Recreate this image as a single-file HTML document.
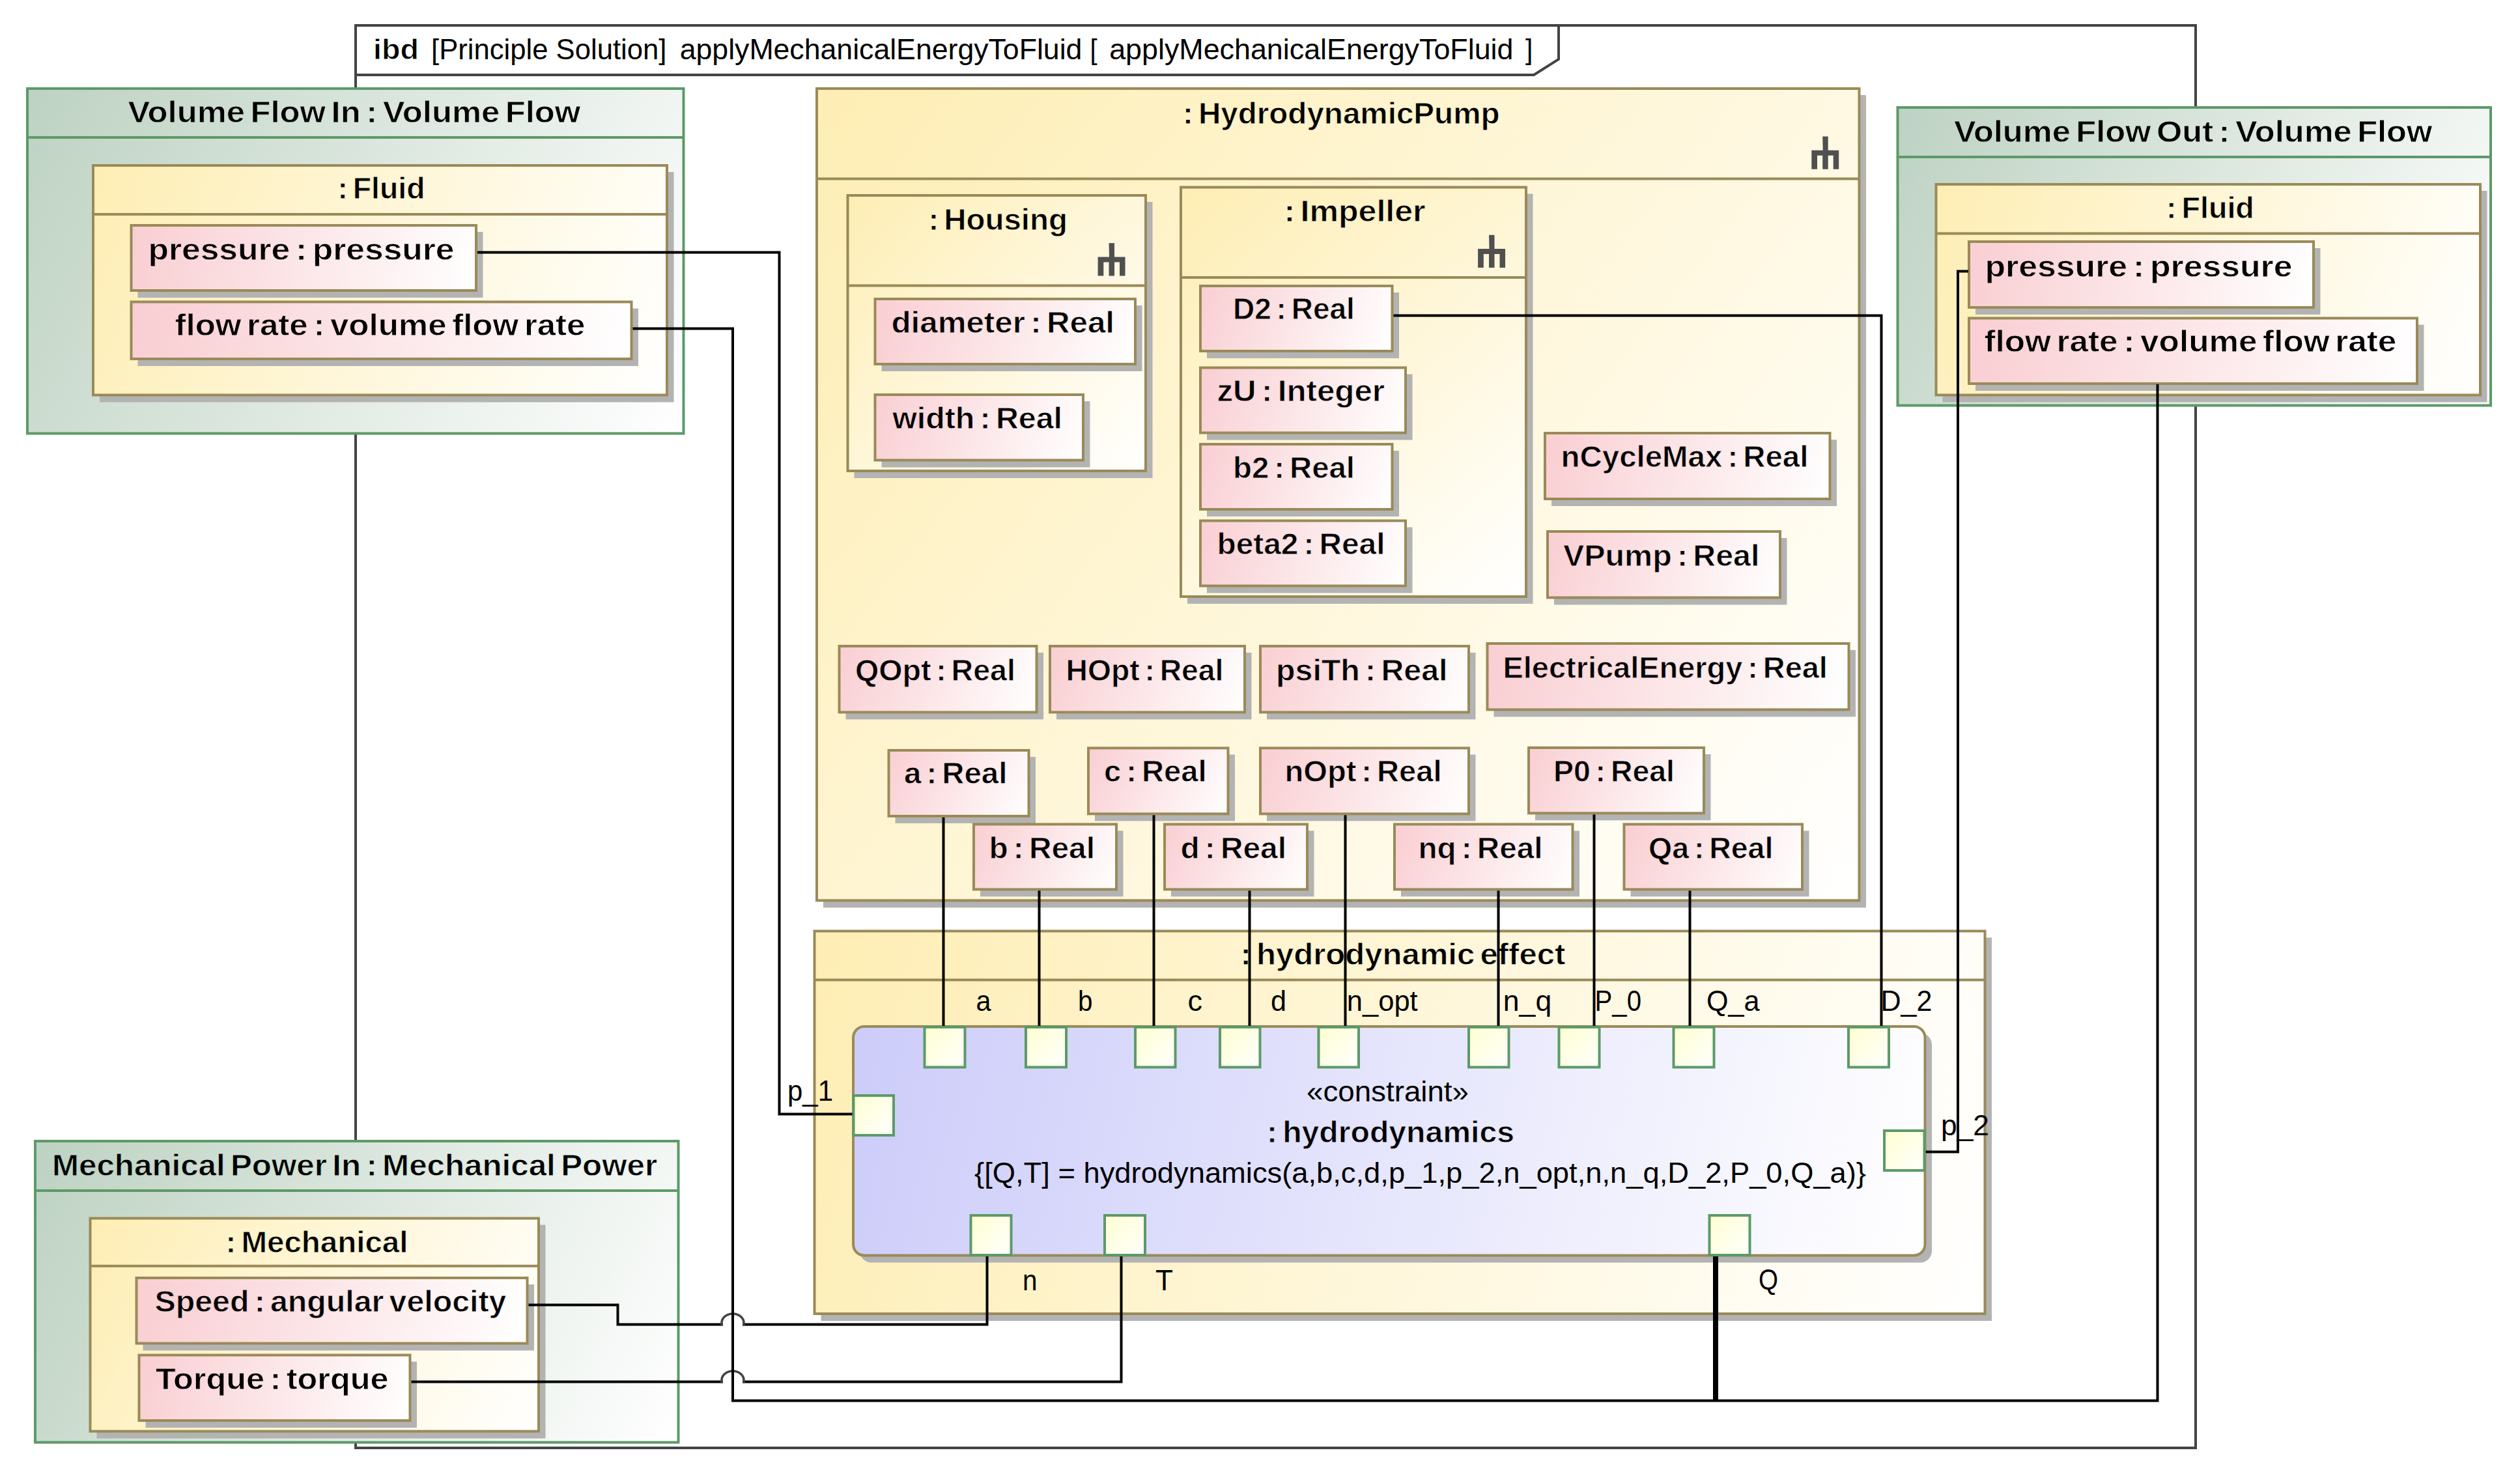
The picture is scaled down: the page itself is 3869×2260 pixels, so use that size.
<!DOCTYPE html>
<html><head><meta charset="utf-8"><title>ibd applyMechanicalEnergyToFluid</title>
<style>html,body{margin:0;padding:0;background:#fff;overflow:hidden}svg{display:block}text{font-family:"Liberation Sans",sans-serif}</style>
</head><body>
<svg width="3869" height="2260" viewBox="0 0 3869 2260">
<rect width="3869" height="2260" fill="#fff"/>
<defs><linearGradient id="gG0" gradientUnits="userSpaceOnUse" x1="40" y1="134" x2="1051.5" y2="667.5"><stop offset="0" stop-color="#BDD2C2"/><stop offset="1" stop-color="#FFFFFF"/></linearGradient><linearGradient id="gY1" gradientUnits="userSpaceOnUse" x1="141" y1="252" x2="1026" y2="608.5"><stop offset="0" stop-color="#FEEEB4"/><stop offset="1" stop-color="#FFFFFF"/></linearGradient><linearGradient id="gP2" gradientUnits="userSpaceOnUse" x1="199.5" y1="344" x2="733" y2="448"><stop offset="0" stop-color="#F9CED2"/><stop offset="1" stop-color="#FFFFFF"/></linearGradient><linearGradient id="gP3" gradientUnits="userSpaceOnUse" x1="199.5" y1="461.5" x2="971.5" y2="553"><stop offset="0" stop-color="#F9CED2"/><stop offset="1" stop-color="#FFFFFF"/></linearGradient><linearGradient id="gG4" gradientUnits="userSpaceOnUse" x1="2911.5" y1="163" x2="3826" y2="624.5"><stop offset="0" stop-color="#BDD2C2"/><stop offset="1" stop-color="#FFFFFF"/></linearGradient><linearGradient id="gY5" gradientUnits="userSpaceOnUse" x1="2970.5" y1="281" x2="3810" y2="608.5"><stop offset="0" stop-color="#FEEEB4"/><stop offset="1" stop-color="#FFFFFF"/></linearGradient><linearGradient id="gP6" gradientUnits="userSpaceOnUse" x1="3021" y1="369" x2="3554" y2="474"><stop offset="0" stop-color="#F9CED2"/><stop offset="1" stop-color="#FFFFFF"/></linearGradient><linearGradient id="gP7" gradientUnits="userSpaceOnUse" x1="3021" y1="486.5" x2="3713" y2="591"><stop offset="0" stop-color="#F9CED2"/><stop offset="1" stop-color="#FFFFFF"/></linearGradient><linearGradient id="gG8" gradientUnits="userSpaceOnUse" x1="52" y1="1750" x2="1043.5" y2="2216.5"><stop offset="0" stop-color="#BDD2C2"/><stop offset="1" stop-color="#FFFFFF"/></linearGradient><linearGradient id="gY9" gradientUnits="userSpaceOnUse" x1="136.5" y1="1868.5" x2="829" y2="2199.5"><stop offset="0" stop-color="#FEEEB4"/><stop offset="1" stop-color="#FFFFFF"/></linearGradient><linearGradient id="gP10" gradientUnits="userSpaceOnUse" x1="207.5" y1="1960" x2="811.5" y2="2064.5"><stop offset="0" stop-color="#F9CED2"/><stop offset="1" stop-color="#FFFFFF"/></linearGradient><linearGradient id="gP11" gradientUnits="userSpaceOnUse" x1="211.5" y1="2078.5" x2="631.5" y2="2183"><stop offset="0" stop-color="#F9CED2"/><stop offset="1" stop-color="#FFFFFF"/></linearGradient><linearGradient id="gY12" gradientUnits="userSpaceOnUse" x1="1252" y1="134" x2="2856.5" y2="1384.5"><stop offset="0" stop-color="#FEEEB4"/><stop offset="1" stop-color="#FFFFFF"/></linearGradient><linearGradient id="gY13" gradientUnits="userSpaceOnUse" x1="1299.5" y1="298" x2="1761" y2="725"><stop offset="0" stop-color="#FEEEB4"/><stop offset="1" stop-color="#FFFFFF"/></linearGradient><linearGradient id="gP14" gradientUnits="userSpaceOnUse" x1="1341.5" y1="457" x2="1745" y2="561"><stop offset="0" stop-color="#F9CED2"/><stop offset="1" stop-color="#FFFFFF"/></linearGradient><linearGradient id="gP15" gradientUnits="userSpaceOnUse" x1="1341.5" y1="604" x2="1665" y2="708.5"><stop offset="0" stop-color="#F9CED2"/><stop offset="1" stop-color="#FFFFFF"/></linearGradient><linearGradient id="gY16" gradientUnits="userSpaceOnUse" x1="1811" y1="285.5" x2="2345" y2="918"><stop offset="0" stop-color="#FEEEB4"/><stop offset="1" stop-color="#FFFFFF"/></linearGradient><linearGradient id="gP17" gradientUnits="userSpaceOnUse" x1="1841" y1="437" x2="2139.5" y2="541"><stop offset="0" stop-color="#F9CED2"/><stop offset="1" stop-color="#FFFFFF"/></linearGradient><linearGradient id="gP18" gradientUnits="userSpaceOnUse" x1="1841" y1="562.5" x2="2160" y2="666.5"><stop offset="0" stop-color="#F9CED2"/><stop offset="1" stop-color="#FFFFFF"/></linearGradient><linearGradient id="gP19" gradientUnits="userSpaceOnUse" x1="1841" y1="680" x2="2139.5" y2="784"><stop offset="0" stop-color="#F9CED2"/><stop offset="1" stop-color="#FFFFFF"/></linearGradient><linearGradient id="gP20" gradientUnits="userSpaceOnUse" x1="1841" y1="797.5" x2="2160" y2="901.5"><stop offset="0" stop-color="#F9CED2"/><stop offset="1" stop-color="#FFFFFF"/></linearGradient><linearGradient id="gP21" gradientUnits="userSpaceOnUse" x1="2370" y1="663" x2="2811.5" y2="768"><stop offset="0" stop-color="#F9CED2"/><stop offset="1" stop-color="#FFFFFF"/></linearGradient><linearGradient id="gP22" gradientUnits="userSpaceOnUse" x1="2374" y1="814" x2="2735" y2="919.5"><stop offset="0" stop-color="#F9CED2"/><stop offset="1" stop-color="#FFFFFF"/></linearGradient><linearGradient id="gP23" gradientUnits="userSpaceOnUse" x1="1286.5" y1="990" x2="1593.5" y2="1095.5"><stop offset="0" stop-color="#F9CED2"/><stop offset="1" stop-color="#FFFFFF"/></linearGradient><linearGradient id="gP24" gradientUnits="userSpaceOnUse" x1="1610" y1="990" x2="1913" y2="1095.5"><stop offset="0" stop-color="#F9CED2"/><stop offset="1" stop-color="#FFFFFF"/></linearGradient><linearGradient id="gP25" gradientUnits="userSpaceOnUse" x1="1933" y1="990" x2="2257" y2="1095.5"><stop offset="0" stop-color="#F9CED2"/><stop offset="1" stop-color="#FFFFFF"/></linearGradient><linearGradient id="gP26" gradientUnits="userSpaceOnUse" x1="2281.5" y1="986" x2="2840.5" y2="1091.5"><stop offset="0" stop-color="#F9CED2"/><stop offset="1" stop-color="#FFFFFF"/></linearGradient><linearGradient id="gP27" gradientUnits="userSpaceOnUse" x1="1362.5" y1="1150" x2="1581.5" y2="1255"><stop offset="0" stop-color="#F9CED2"/><stop offset="1" stop-color="#FFFFFF"/></linearGradient><linearGradient id="gP28" gradientUnits="userSpaceOnUse" x1="1669" y1="1146.5" x2="1887.5" y2="1251.5"><stop offset="0" stop-color="#F9CED2"/><stop offset="1" stop-color="#FFFFFF"/></linearGradient><linearGradient id="gP29" gradientUnits="userSpaceOnUse" x1="1933" y1="1146.5" x2="2257" y2="1251.5"><stop offset="0" stop-color="#F9CED2"/><stop offset="1" stop-color="#FFFFFF"/></linearGradient><linearGradient id="gP30" gradientUnits="userSpaceOnUse" x1="2345" y1="1146" x2="2618" y2="1250.5"><stop offset="0" stop-color="#F9CED2"/><stop offset="1" stop-color="#FFFFFF"/></linearGradient><linearGradient id="gP31" gradientUnits="userSpaceOnUse" x1="1493" y1="1263.5" x2="1716" y2="1367.5"><stop offset="0" stop-color="#F9CED2"/><stop offset="1" stop-color="#FFFFFF"/></linearGradient><linearGradient id="gP32" gradientUnits="userSpaceOnUse" x1="1786" y1="1263.5" x2="2009" y2="1367.5"><stop offset="0" stop-color="#F9CED2"/><stop offset="1" stop-color="#FFFFFF"/></linearGradient><linearGradient id="gP33" gradientUnits="userSpaceOnUse" x1="2139" y1="1263.5" x2="2416.5" y2="1367.5"><stop offset="0" stop-color="#F9CED2"/><stop offset="1" stop-color="#FFFFFF"/></linearGradient><linearGradient id="gP34" gradientUnits="userSpaceOnUse" x1="2491.5" y1="1263.5" x2="2769" y2="1367.5"><stop offset="0" stop-color="#F9CED2"/><stop offset="1" stop-color="#FFFFFF"/></linearGradient><linearGradient id="gY35" gradientUnits="userSpaceOnUse" x1="1248.5" y1="1427.5" x2="3049.5" y2="2019"><stop offset="0" stop-color="#FEEEB4"/><stop offset="1" stop-color="#FFFFFF"/></linearGradient><linearGradient id="gB36" gradientUnits="userSpaceOnUse" x1="1308" y1="1574" x2="2957.5" y2="1929.5"><stop offset="0" stop-color="#CCCCFA"/><stop offset="1" stop-color="#FFFFFF"/></linearGradient><linearGradient id="gQ37" gradientUnits="userSpaceOnUse" x1="1417.5" y1="1575" x2="1483.5" y2="1640.5"><stop offset="0" stop-color="#FFFFD0"/><stop offset="1" stop-color="#FFFFFF"/></linearGradient><linearGradient id="gQ38" gradientUnits="userSpaceOnUse" x1="1573" y1="1575" x2="1639" y2="1640.5"><stop offset="0" stop-color="#FFFFD0"/><stop offset="1" stop-color="#FFFFFF"/></linearGradient><linearGradient id="gQ39" gradientUnits="userSpaceOnUse" x1="1741" y1="1575" x2="1806.5" y2="1640.5"><stop offset="0" stop-color="#FFFFD0"/><stop offset="1" stop-color="#FFFFFF"/></linearGradient><linearGradient id="gQ40" gradientUnits="userSpaceOnUse" x1="1871" y1="1575" x2="1936.5" y2="1640.5"><stop offset="0" stop-color="#FFFFD0"/><stop offset="1" stop-color="#FFFFFF"/></linearGradient><linearGradient id="gQ41" gradientUnits="userSpaceOnUse" x1="2022.5" y1="1575" x2="2088" y2="1640.5"><stop offset="0" stop-color="#FFFFD0"/><stop offset="1" stop-color="#FFFFFF"/></linearGradient><linearGradient id="gQ42" gradientUnits="userSpaceOnUse" x1="2253" y1="1575" x2="2318.5" y2="1640.5"><stop offset="0" stop-color="#FFFFD0"/><stop offset="1" stop-color="#FFFFFF"/></linearGradient><linearGradient id="gQ43" gradientUnits="userSpaceOnUse" x1="2391.5" y1="1575" x2="2457.5" y2="1640.5"><stop offset="0" stop-color="#FFFFD0"/><stop offset="1" stop-color="#FFFFFF"/></linearGradient><linearGradient id="gQ44" gradientUnits="userSpaceOnUse" x1="2567.5" y1="1575" x2="2633.5" y2="1640.5"><stop offset="0" stop-color="#FFFFD0"/><stop offset="1" stop-color="#FFFFFF"/></linearGradient><linearGradient id="gQ45" gradientUnits="userSpaceOnUse" x1="2836" y1="1575" x2="2902" y2="1640.5"><stop offset="0" stop-color="#FFFFD0"/><stop offset="1" stop-color="#FFFFFF"/></linearGradient><linearGradient id="gQ46" gradientUnits="userSpaceOnUse" x1="1308.5" y1="1680" x2="1374" y2="1745"><stop offset="0" stop-color="#FFFFD0"/><stop offset="1" stop-color="#FFFFFF"/></linearGradient><linearGradient id="gQ47" gradientUnits="userSpaceOnUse" x1="2891" y1="1734" x2="2956.5" y2="1799"><stop offset="0" stop-color="#FFFFD0"/><stop offset="1" stop-color="#FFFFFF"/></linearGradient><linearGradient id="gQ48" gradientUnits="userSpaceOnUse" x1="1488.5" y1="1864" x2="1554.5" y2="1929"><stop offset="0" stop-color="#FFFFD0"/><stop offset="1" stop-color="#FFFFFF"/></linearGradient><linearGradient id="gQ49" gradientUnits="userSpaceOnUse" x1="1694" y1="1864" x2="1760" y2="1929"><stop offset="0" stop-color="#FFFFD0"/><stop offset="1" stop-color="#FFFFFF"/></linearGradient><linearGradient id="gQ50" gradientUnits="userSpaceOnUse" x1="2622.5" y1="1864" x2="2688.5" y2="1929"><stop offset="0" stop-color="#FFFFD0"/><stop offset="1" stop-color="#FFFFFF"/></linearGradient></defs>
<path d="M546 39 H3371 V2223 H546 Z" fill="none" stroke="#444" stroke-width="4"/>
<path d="M546 115 H2355 L2393 91 V39" fill="none" stroke="#444" stroke-width="4"/>
<text x="573.0" y="91.0" font-size="45" font-weight="bold" stroke="#fff" stroke-width="0.8" textLength="70.0" lengthAdjust="spacingAndGlyphs" fill="#000">ibd</text>
<text x="662.0" y="91.0" font-size="45" font-weight="normal" textLength="179.5" lengthAdjust="spacingAndGlyphs" fill="#000">[Principle</text>
<text x="853.6" y="91.0" font-size="45" font-weight="normal" textLength="169.8" lengthAdjust="spacingAndGlyphs" fill="#000">Solution]</text>
<text x="1043.7" y="91.0" font-size="45" font-weight="normal" textLength="617.7" lengthAdjust="spacingAndGlyphs" fill="#000">applyMechanicalEnergyToFluid</text>
<text x="1673.4" y="91.0" font-size="45" font-weight="normal" textLength="11.1" lengthAdjust="spacingAndGlyphs" fill="#000">[</text>
<text x="1703.2" y="91.0" font-size="45" font-weight="normal" textLength="620.3" lengthAdjust="spacingAndGlyphs" fill="#000">applyMechanicalEnergyToFluid</text>
<text x="2342.0" y="91.0" font-size="45" font-weight="normal" textLength="11.3" lengthAdjust="spacingAndGlyphs" fill="#000">]</text>
<rect x="42.0" y="136.0" width="1007.5" height="529.5" fill="url(#gG0)" stroke="#5C9A68" stroke-width="4"/>
<line x1="42.0" y1="211.0" x2="1049.5" y2="211.0" stroke="#5C9A68" stroke-width="4"/>
<text x="196.5" y="188.0" font-size="46" font-weight="bold" stroke="url(#gG0)" stroke-width="0.8" textLength="179.5" lengthAdjust="spacingAndGlyphs" fill="#000">Volume</text>
<text x="384.5" y="188.0" font-size="46" font-weight="bold" stroke="url(#gG0)" stroke-width="0.8" textLength="115.5" lengthAdjust="spacingAndGlyphs" fill="#000">Flow</text>
<text x="508.6" y="188.0" font-size="46" font-weight="bold" stroke="url(#gG0)" stroke-width="0.8" textLength="45.1" lengthAdjust="spacingAndGlyphs" fill="#000">In</text>
<text x="562.3" y="188.0" font-size="46" font-weight="bold" stroke="url(#gG0)" stroke-width="0.8" textLength="16.9" lengthAdjust="spacingAndGlyphs" fill="#000">:</text>
<text x="587.8" y="188.0" font-size="46" font-weight="bold" stroke="url(#gG0)" stroke-width="0.8" textLength="179.5" lengthAdjust="spacingAndGlyphs" fill="#000">Volume</text>
<text x="775.8" y="188.0" font-size="46" font-weight="bold" stroke="url(#gG0)" stroke-width="0.8" textLength="115.5" lengthAdjust="spacingAndGlyphs" fill="#000">Flow</text>
<rect x="153.0" y="264.0" width="881.5" height="353.5" fill="#B3B3B3"/>
<rect x="143.0" y="254.0" width="881.0" height="352.5" fill="url(#gY1)" stroke="#9A8A58" stroke-width="4"/>
<line x1="143.0" y1="329.0" x2="1024.0" y2="329.0" stroke="#9A8A58" stroke-width="4"/>
<text x="518.5" y="305.0" font-size="46" font-weight="bold" stroke="url(#gY1)" stroke-width="0.8" textLength="15.4" lengthAdjust="spacingAndGlyphs" fill="#000">:</text>
<text x="541.8" y="305.0" font-size="46" font-weight="bold" stroke="url(#gY1)" stroke-width="0.8" textLength="110.7" lengthAdjust="spacingAndGlyphs" fill="#000">Fluid</text>
<rect x="211.5" y="356.0" width="530.0" height="101.0" fill="#B3B3B3"/>
<rect x="201.5" y="346.0" width="529.5" height="100.0" fill="url(#gP2)" stroke="#9A8A58" stroke-width="4"/>
<text x="227.5" y="398.5" font-size="46" font-weight="bold" stroke="url(#gP2)" stroke-width="0.8" textLength="217.7" lengthAdjust="spacingAndGlyphs" fill="#000">pressure</text>
<text x="453.9" y="398.5" font-size="46" font-weight="bold" stroke="url(#gP2)" stroke-width="0.8" textLength="17.2" lengthAdjust="spacingAndGlyphs" fill="#000">:</text>
<text x="479.8" y="398.5" font-size="46" font-weight="bold" stroke="url(#gP2)" stroke-width="0.8" textLength="217.7" lengthAdjust="spacingAndGlyphs" fill="#000">pressure</text>
<rect x="211.5" y="473.5" width="768.5" height="88.5" fill="#B3B3B3"/>
<rect x="201.5" y="463.5" width="768.0" height="87.5" fill="url(#gP3)" stroke="#9A8A58" stroke-width="4"/>
<text x="268.5" y="515.0" font-size="46" font-weight="bold" stroke="url(#gP3)" stroke-width="0.8" textLength="102.0" lengthAdjust="spacingAndGlyphs" fill="#000">flow</text>
<text x="379.1" y="515.0" font-size="46" font-weight="bold" stroke="url(#gP3)" stroke-width="0.8" textLength="93.6" lengthAdjust="spacingAndGlyphs" fill="#000">rate</text>
<text x="481.4" y="515.0" font-size="46" font-weight="bold" stroke="url(#gP3)" stroke-width="0.8" textLength="17.0" lengthAdjust="spacingAndGlyphs" fill="#000">:</text>
<text x="507.0" y="515.0" font-size="46" font-weight="bold" stroke="url(#gP3)" stroke-width="0.8" textLength="178.6" lengthAdjust="spacingAndGlyphs" fill="#000">volume</text>
<text x="694.2" y="515.0" font-size="46" font-weight="bold" stroke="url(#gP3)" stroke-width="0.8" textLength="102.0" lengthAdjust="spacingAndGlyphs" fill="#000">flow</text>
<text x="804.9" y="515.0" font-size="46" font-weight="bold" stroke="url(#gP3)" stroke-width="0.8" textLength="93.6" lengthAdjust="spacingAndGlyphs" fill="#000">rate</text>
<rect x="2913.5" y="165.0" width="910.5" height="457.5" fill="url(#gG4)" stroke="#5C9A68" stroke-width="4"/>
<line x1="2913.5" y1="241.0" x2="3824.0" y2="241.0" stroke="#5C9A68" stroke-width="4"/>
<text x="3000.0" y="218.0" font-size="46" font-weight="bold" stroke="url(#gG4)" stroke-width="0.8" textLength="178.8" lengthAdjust="spacingAndGlyphs" fill="#000">Volume</text>
<text x="3187.3" y="218.0" font-size="46" font-weight="bold" stroke="url(#gG4)" stroke-width="0.8" textLength="115.1" lengthAdjust="spacingAndGlyphs" fill="#000">Flow</text>
<text x="3311.0" y="218.0" font-size="46" font-weight="bold" stroke="url(#gG4)" stroke-width="0.8" textLength="87.0" lengthAdjust="spacingAndGlyphs" fill="#000">Out</text>
<text x="3406.5" y="218.0" font-size="46" font-weight="bold" stroke="url(#gG4)" stroke-width="0.8" textLength="16.8" lengthAdjust="spacingAndGlyphs" fill="#000">:</text>
<text x="3431.9" y="218.0" font-size="46" font-weight="bold" stroke="url(#gG4)" stroke-width="0.8" textLength="178.8" lengthAdjust="spacingAndGlyphs" fill="#000">Volume</text>
<text x="3619.2" y="218.0" font-size="46" font-weight="bold" stroke="url(#gG4)" stroke-width="0.8" textLength="115.1" lengthAdjust="spacingAndGlyphs" fill="#000">Flow</text>
<rect x="2982.5" y="293.0" width="836.0" height="324.5" fill="#B3B3B3"/>
<rect x="2972.5" y="283.0" width="835.5" height="323.5" fill="url(#gY5)" stroke="#9A8A58" stroke-width="4"/>
<line x1="2972.5" y1="358.5" x2="3808.0" y2="358.5" stroke="#9A8A58" stroke-width="4"/>
<text x="3326.0" y="335.0" font-size="46" font-weight="bold" stroke="url(#gY5)" stroke-width="0.8" textLength="15.5" lengthAdjust="spacingAndGlyphs" fill="#000">:</text>
<text x="3349.4" y="335.0" font-size="46" font-weight="bold" stroke="url(#gY5)" stroke-width="0.8" textLength="111.5" lengthAdjust="spacingAndGlyphs" fill="#000">Fluid</text>
<rect x="3033.0" y="381.0" width="529.5" height="102.0" fill="#B3B3B3"/>
<rect x="3023.0" y="371.0" width="529.0" height="101.0" fill="url(#gP6)" stroke="#9A8A58" stroke-width="4"/>
<text x="3047.5" y="425.0" font-size="46" font-weight="bold" stroke="url(#gP6)" stroke-width="0.8" textLength="218.6" lengthAdjust="spacingAndGlyphs" fill="#000">pressure</text>
<text x="3274.9" y="425.0" font-size="46" font-weight="bold" stroke="url(#gP6)" stroke-width="0.8" textLength="17.2" lengthAdjust="spacingAndGlyphs" fill="#000">:</text>
<text x="3300.9" y="425.0" font-size="46" font-weight="bold" stroke="url(#gP6)" stroke-width="0.8" textLength="218.6" lengthAdjust="spacingAndGlyphs" fill="#000">pressure</text>
<rect x="3033.0" y="498.5" width="688.5" height="101.5" fill="#B3B3B3"/>
<rect x="3023.0" y="488.5" width="688.0" height="100.5" fill="url(#gP7)" stroke="#9A8A58" stroke-width="4"/>
<text x="3046.5" y="540.3" font-size="46" font-weight="bold" stroke="url(#gP7)" stroke-width="0.8" textLength="102.5" lengthAdjust="spacingAndGlyphs" fill="#000">flow</text>
<text x="3157.6" y="540.3" font-size="46" font-weight="bold" stroke="url(#gP7)" stroke-width="0.8" textLength="94.0" lengthAdjust="spacingAndGlyphs" fill="#000">rate</text>
<text x="3260.3" y="540.3" font-size="46" font-weight="bold" stroke="url(#gP7)" stroke-width="0.8" textLength="17.1" lengthAdjust="spacingAndGlyphs" fill="#000">:</text>
<text x="3286.1" y="540.3" font-size="46" font-weight="bold" stroke="url(#gP7)" stroke-width="0.8" textLength="179.4" lengthAdjust="spacingAndGlyphs" fill="#000">volume</text>
<text x="3474.1" y="540.3" font-size="46" font-weight="bold" stroke="url(#gP7)" stroke-width="0.8" textLength="102.5" lengthAdjust="spacingAndGlyphs" fill="#000">flow</text>
<text x="3585.3" y="540.3" font-size="46" font-weight="bold" stroke="url(#gP7)" stroke-width="0.8" textLength="94.0" lengthAdjust="spacingAndGlyphs" fill="#000">rate</text>
<rect x="54.0" y="1752.0" width="987.5" height="462.5" fill="url(#gG8)" stroke="#5C9A68" stroke-width="4"/>
<line x1="54.0" y1="1828.0" x2="1041.5" y2="1828.0" stroke="#5C9A68" stroke-width="4"/>
<text x="80.0" y="1805.0" font-size="46" font-weight="bold" stroke="url(#gG8)" stroke-width="0.8" textLength="265.7" lengthAdjust="spacingAndGlyphs" fill="#000">Mechanical</text>
<text x="354.0" y="1805.0" font-size="46" font-weight="bold" stroke="url(#gG8)" stroke-width="0.8" textLength="147.9" lengthAdjust="spacingAndGlyphs" fill="#000">Power</text>
<text x="510.3" y="1805.0" font-size="46" font-weight="bold" stroke="url(#gG8)" stroke-width="0.8" textLength="43.8" lengthAdjust="spacingAndGlyphs" fill="#000">In</text>
<text x="562.4" y="1805.0" font-size="46" font-weight="bold" stroke="url(#gG8)" stroke-width="0.8" textLength="16.4" lengthAdjust="spacingAndGlyphs" fill="#000">:</text>
<text x="587.1" y="1805.0" font-size="46" font-weight="bold" stroke="url(#gG8)" stroke-width="0.8" textLength="265.7" lengthAdjust="spacingAndGlyphs" fill="#000">Mechanical</text>
<text x="861.2" y="1805.0" font-size="46" font-weight="bold" stroke="url(#gG8)" stroke-width="0.8" textLength="147.9" lengthAdjust="spacingAndGlyphs" fill="#000">Power</text>
<rect x="148.5" y="1880.5" width="689.0" height="328.0" fill="#B3B3B3"/>
<rect x="138.5" y="1870.5" width="688.5" height="327.0" fill="url(#gY9)" stroke="#9A8A58" stroke-width="4"/>
<line x1="138.5" y1="1943.8" x2="827.0" y2="1943.8" stroke="#9A8A58" stroke-width="4"/>
<text x="346.5" y="1922.5" font-size="46" font-weight="bold" stroke="url(#gY9)" stroke-width="0.8" textLength="15.8" lengthAdjust="spacingAndGlyphs" fill="#000">:</text>
<text x="370.4" y="1922.5" font-size="46" font-weight="bold" stroke="url(#gY9)" stroke-width="0.8" textLength="256.1" lengthAdjust="spacingAndGlyphs" fill="#000">Mechanical</text>
<rect x="219.5" y="1972.0" width="600.5" height="101.5" fill="#B3B3B3"/>
<rect x="209.5" y="1962.0" width="600.0" height="100.5" fill="url(#gP10)" stroke="#9A8A58" stroke-width="4"/>
<text x="237.5" y="2013.5" font-size="46" font-weight="bold" stroke="url(#gP10)" stroke-width="0.8" textLength="145.0" lengthAdjust="spacingAndGlyphs" fill="#000">Speed</text>
<text x="390.7" y="2013.5" font-size="46" font-weight="bold" stroke="url(#gP10)" stroke-width="0.8" textLength="16.1" lengthAdjust="spacingAndGlyphs" fill="#000">:</text>
<text x="414.9" y="2013.5" font-size="46" font-weight="bold" stroke="url(#gP10)" stroke-width="0.8" textLength="174.5" lengthAdjust="spacingAndGlyphs" fill="#000">angular</text>
<text x="597.6" y="2013.5" font-size="46" font-weight="bold" stroke="url(#gP10)" stroke-width="0.8" textLength="179.9" lengthAdjust="spacingAndGlyphs" fill="#000">velocity</text>
<rect x="223.5" y="2090.5" width="416.5" height="101.5" fill="#B3B3B3"/>
<rect x="213.5" y="2080.5" width="416.0" height="100.5" fill="url(#gP11)" stroke="#9A8A58" stroke-width="4"/>
<text x="239.0" y="2132.5" font-size="46" font-weight="bold" stroke="url(#gP11)" stroke-width="0.8" textLength="167.0" lengthAdjust="spacingAndGlyphs" fill="#000">Torque</text>
<text x="414.5" y="2132.5" font-size="46" font-weight="bold" stroke="url(#gP11)" stroke-width="0.8" textLength="16.8" lengthAdjust="spacingAndGlyphs" fill="#000">:</text>
<text x="439.8" y="2132.5" font-size="46" font-weight="bold" stroke="url(#gP11)" stroke-width="0.8" textLength="156.7" lengthAdjust="spacingAndGlyphs" fill="#000">torque</text>
<rect x="1264.0" y="146.0" width="1601.0" height="1247.5" fill="#B3B3B3"/>
<rect x="1254.0" y="136.0" width="1600.5" height="1246.5" fill="url(#gY12)" stroke="#9A8A58" stroke-width="4"/>
<line x1="1254.0" y1="274.5" x2="2854.5" y2="274.5" stroke="#9A8A58" stroke-width="4"/>
<text x="1816.0" y="190.0" font-size="46" font-weight="bold" stroke="url(#gY12)" stroke-width="0.8" textLength="15.8" lengthAdjust="spacingAndGlyphs" fill="#000">:</text>
<text x="1839.9" y="190.0" font-size="46" font-weight="bold" stroke="url(#gY12)" stroke-width="0.8" textLength="462.6" lengthAdjust="spacingAndGlyphs" fill="#000">HydrodynamicPump</text>
<path d="M2798.2 209.5h8.5v21.2h16.5v29.1h-8.5v-21h-8v21h-8.5v-21h-8.2v21h-8.7v-29.1h17.4z" fill="#505050"/>
<rect x="1311.5" y="310.0" width="458.0" height="424.0" fill="#B3B3B3"/>
<rect x="1301.5" y="300.0" width="457.5" height="423.0" fill="url(#gY13)" stroke="#9A8A58" stroke-width="4"/>
<line x1="1301.5" y1="438.5" x2="1759.0" y2="438.5" stroke="#9A8A58" stroke-width="4"/>
<text x="1425.5" y="352.5" font-size="46" font-weight="bold" stroke="url(#gY13)" stroke-width="0.8" textLength="15.8" lengthAdjust="spacingAndGlyphs" fill="#000">:</text>
<text x="1449.3" y="352.5" font-size="46" font-weight="bold" stroke="url(#gY13)" stroke-width="0.8" textLength="189.7" lengthAdjust="spacingAndGlyphs" fill="#000">Housing</text>
<path d="M1702.5 373.2h8.5v21.2h16.5v29.1h-8.5v-21h-8v21h-8.5v-21h-8.2v21h-8.7v-29.1h17.4z" fill="#505050"/>
<rect x="1353.5" y="469.0" width="400.0" height="101.0" fill="#B3B3B3"/>
<rect x="1343.5" y="459.0" width="399.5" height="100.0" fill="url(#gP14)" stroke="#9A8A58" stroke-width="4"/>
<text x="1368.5" y="511.0" font-size="46" font-weight="bold" stroke="url(#gP14)" stroke-width="0.8" textLength="205.3" lengthAdjust="spacingAndGlyphs" fill="#000">diameter</text>
<text x="1582.2" y="511.0" font-size="46" font-weight="bold" stroke="url(#gP14)" stroke-width="0.8" textLength="16.4" lengthAdjust="spacingAndGlyphs" fill="#000">:</text>
<text x="1606.9" y="511.0" font-size="46" font-weight="bold" stroke="url(#gP14)" stroke-width="0.8" textLength="104.1" lengthAdjust="spacingAndGlyphs" fill="#000">Real</text>
<rect x="1353.5" y="616.0" width="320.0" height="101.5" fill="#B3B3B3"/>
<rect x="1343.5" y="606.0" width="319.5" height="100.5" fill="url(#gP15)" stroke="#9A8A58" stroke-width="4"/>
<text x="1370.2" y="657.5" font-size="46" font-weight="bold" stroke="url(#gP15)" stroke-width="0.8" textLength="126.2" lengthAdjust="spacingAndGlyphs" fill="#000">width</text>
<text x="1504.6" y="657.5" font-size="46" font-weight="bold" stroke="url(#gP15)" stroke-width="0.8" textLength="16.1" lengthAdjust="spacingAndGlyphs" fill="#000">:</text>
<text x="1528.9" y="657.5" font-size="46" font-weight="bold" stroke="url(#gP15)" stroke-width="0.8" textLength="102.1" lengthAdjust="spacingAndGlyphs" fill="#000">Real</text>
<rect x="1823.0" y="297.5" width="530.5" height="629.5" fill="#B3B3B3"/>
<rect x="1813.0" y="287.5" width="530.0" height="628.5" fill="url(#gY16)" stroke="#9A8A58" stroke-width="4"/>
<line x1="1813.0" y1="426.0" x2="2343.0" y2="426.0" stroke="#9A8A58" stroke-width="4"/>
<text x="1971.5" y="340.0" font-size="46" font-weight="bold" stroke="url(#gY16)" stroke-width="0.8" textLength="16.7" lengthAdjust="spacingAndGlyphs" fill="#000">:</text>
<text x="1996.6" y="340.0" font-size="46" font-weight="bold" stroke="url(#gY16)" stroke-width="0.8" textLength="191.9" lengthAdjust="spacingAndGlyphs" fill="#000">Impeller</text>
<path d="M2286.0 360.7h8.5v21.2h16.5v29.1h-8.5v-21h-8v21h-8.5v-21h-8.2v21h-8.7v-29.1h17.4z" fill="#505050"/>
<rect x="1853.0" y="449.0" width="295.0" height="101.0" fill="#B3B3B3"/>
<rect x="1843.0" y="439.0" width="294.5" height="100.0" fill="url(#gP17)" stroke="#9A8A58" stroke-width="4"/>
<text x="1893.0" y="490.0" font-size="46" font-weight="bold" stroke="url(#gP17)" stroke-width="0.8" textLength="58.8" lengthAdjust="spacingAndGlyphs" fill="#000">D2</text>
<text x="1959.6" y="490.0" font-size="46" font-weight="bold" stroke="url(#gP17)" stroke-width="0.8" textLength="15.3" lengthAdjust="spacingAndGlyphs" fill="#000">:</text>
<text x="1982.7" y="490.0" font-size="46" font-weight="bold" stroke="url(#gP17)" stroke-width="0.8" textLength="97.2" lengthAdjust="spacingAndGlyphs" fill="#000">Real</text>
<rect x="1853.0" y="574.5" width="315.5" height="101.0" fill="#B3B3B3"/>
<rect x="1843.0" y="564.5" width="315.0" height="100.0" fill="url(#gP18)" stroke="#9A8A58" stroke-width="4"/>
<text x="1868.5" y="616.0" font-size="46" font-weight="bold" stroke="url(#gP18)" stroke-width="0.8" textLength="60.2" lengthAdjust="spacingAndGlyphs" fill="#000">zU</text>
<text x="1937.0" y="616.0" font-size="46" font-weight="bold" stroke="url(#gP18)" stroke-width="0.8" textLength="16.4" lengthAdjust="spacingAndGlyphs" fill="#000">:</text>
<text x="1961.8" y="616.0" font-size="46" font-weight="bold" stroke="url(#gP18)" stroke-width="0.8" textLength="164.2" lengthAdjust="spacingAndGlyphs" fill="#000">Integer</text>
<rect x="1853.0" y="692.0" width="295.0" height="101.0" fill="#B3B3B3"/>
<rect x="1843.0" y="682.0" width="294.5" height="100.0" fill="url(#gP19)" stroke="#9A8A58" stroke-width="4"/>
<text x="1893.0" y="733.5" font-size="46" font-weight="bold" stroke="url(#gP19)" stroke-width="0.8" textLength="55.2" lengthAdjust="spacingAndGlyphs" fill="#000">b2</text>
<text x="1956.2" y="733.5" font-size="46" font-weight="bold" stroke="url(#gP19)" stroke-width="0.8" textLength="15.8" lengthAdjust="spacingAndGlyphs" fill="#000">:</text>
<text x="1980.0" y="733.5" font-size="46" font-weight="bold" stroke="url(#gP19)" stroke-width="0.8" textLength="100.0" lengthAdjust="spacingAndGlyphs" fill="#000">Real</text>
<rect x="1853.0" y="809.5" width="315.5" height="101.0" fill="#B3B3B3"/>
<rect x="1843.0" y="799.5" width="315.0" height="100.0" fill="url(#gP20)" stroke="#9A8A58" stroke-width="4"/>
<text x="1868.5" y="851.0" font-size="46" font-weight="bold" stroke="url(#gP20)" stroke-width="0.8" textLength="124.9" lengthAdjust="spacingAndGlyphs" fill="#000">beta2</text>
<text x="2001.5" y="851.0" font-size="46" font-weight="bold" stroke="url(#gP20)" stroke-width="0.8" textLength="15.9" lengthAdjust="spacingAndGlyphs" fill="#000">:</text>
<text x="2025.5" y="851.0" font-size="46" font-weight="bold" stroke="url(#gP20)" stroke-width="0.8" textLength="101.0" lengthAdjust="spacingAndGlyphs" fill="#000">Real</text>
<rect x="2382.0" y="675.0" width="438.0" height="102.0" fill="#B3B3B3"/>
<rect x="2372.0" y="665.0" width="437.5" height="101.0" fill="url(#gP21)" stroke="#9A8A58" stroke-width="4"/>
<text x="2396.5" y="716.5" font-size="46" font-weight="bold" stroke="url(#gP21)" stroke-width="0.8" textLength="247.9" lengthAdjust="spacingAndGlyphs" fill="#000">nCycleMax</text>
<text x="2652.4" y="716.5" font-size="46" font-weight="bold" stroke="url(#gP21)" stroke-width="0.8" textLength="15.8" lengthAdjust="spacingAndGlyphs" fill="#000">:</text>
<text x="2676.2" y="716.5" font-size="46" font-weight="bold" stroke="url(#gP21)" stroke-width="0.8" textLength="100.2" lengthAdjust="spacingAndGlyphs" fill="#000">Real</text>
<rect x="2386.0" y="826.0" width="357.5" height="102.5" fill="#B3B3B3"/>
<rect x="2376.0" y="816.0" width="357.0" height="101.5" fill="url(#gP22)" stroke="#9A8A58" stroke-width="4"/>
<text x="2400.0" y="868.5" font-size="46" font-weight="bold" stroke="url(#gP22)" stroke-width="0.8" textLength="166.7" lengthAdjust="spacingAndGlyphs" fill="#000">VPump</text>
<text x="2574.9" y="868.5" font-size="46" font-weight="bold" stroke="url(#gP22)" stroke-width="0.8" textLength="16.1" lengthAdjust="spacingAndGlyphs" fill="#000">:</text>
<text x="2599.2" y="868.5" font-size="46" font-weight="bold" stroke="url(#gP22)" stroke-width="0.8" textLength="102.2" lengthAdjust="spacingAndGlyphs" fill="#000">Real</text>
<rect x="1298.5" y="1002.0" width="303.5" height="102.5" fill="#B3B3B3"/>
<rect x="1288.5" y="992.0" width="303.0" height="101.5" fill="url(#gP23)" stroke="#9A8A58" stroke-width="4"/>
<text x="1313.0" y="1045.0" font-size="46" font-weight="bold" stroke="url(#gP23)" stroke-width="0.8" textLength="116.4" lengthAdjust="spacingAndGlyphs" fill="#000">QOpt</text>
<text x="1437.2" y="1045.0" font-size="46" font-weight="bold" stroke="url(#gP23)" stroke-width="0.8" textLength="15.5" lengthAdjust="spacingAndGlyphs" fill="#000">:</text>
<text x="1460.6" y="1045.0" font-size="46" font-weight="bold" stroke="url(#gP23)" stroke-width="0.8" textLength="98.3" lengthAdjust="spacingAndGlyphs" fill="#000">Real</text>
<rect x="1622.0" y="1002.0" width="299.5" height="102.5" fill="#B3B3B3"/>
<rect x="1612.0" y="992.0" width="299.0" height="101.5" fill="url(#gP24)" stroke="#9A8A58" stroke-width="4"/>
<text x="1636.5" y="1045.0" font-size="46" font-weight="bold" stroke="url(#gP24)" stroke-width="0.8" textLength="113.1" lengthAdjust="spacingAndGlyphs" fill="#000">HOpt</text>
<text x="1757.4" y="1045.0" font-size="46" font-weight="bold" stroke="url(#gP24)" stroke-width="0.8" textLength="15.4" lengthAdjust="spacingAndGlyphs" fill="#000">:</text>
<text x="1780.7" y="1045.0" font-size="46" font-weight="bold" stroke="url(#gP24)" stroke-width="0.8" textLength="97.8" lengthAdjust="spacingAndGlyphs" fill="#000">Real</text>
<rect x="1945.0" y="1002.0" width="320.5" height="102.5" fill="#B3B3B3"/>
<rect x="1935.0" y="992.0" width="320.0" height="101.5" fill="url(#gP25)" stroke="#9A8A58" stroke-width="4"/>
<text x="1959.0" y="1045.0" font-size="46" font-weight="bold" stroke="url(#gP25)" stroke-width="0.8" textLength="128.9" lengthAdjust="spacingAndGlyphs" fill="#000">psiTh</text>
<text x="2096.1" y="1045.0" font-size="46" font-weight="bold" stroke="url(#gP25)" stroke-width="0.8" textLength="16.1" lengthAdjust="spacingAndGlyphs" fill="#000">:</text>
<text x="2120.4" y="1045.0" font-size="46" font-weight="bold" stroke="url(#gP25)" stroke-width="0.8" textLength="102.1" lengthAdjust="spacingAndGlyphs" fill="#000">Real</text>
<rect x="2293.5" y="998.0" width="555.5" height="102.5" fill="#B3B3B3"/>
<rect x="2283.5" y="988.0" width="555.0" height="101.5" fill="url(#gP26)" stroke="#9A8A58" stroke-width="4"/>
<text x="2307.5" y="1041.0" font-size="46" font-weight="bold" stroke="url(#gP26)" stroke-width="0.8" textLength="367.8" lengthAdjust="spacingAndGlyphs" fill="#000">ElectricalEnergy</text>
<text x="2683.3" y="1041.0" font-size="46" font-weight="bold" stroke="url(#gP26)" stroke-width="0.8" textLength="15.6" lengthAdjust="spacingAndGlyphs" fill="#000">:</text>
<text x="2706.8" y="1041.0" font-size="46" font-weight="bold" stroke="url(#gP26)" stroke-width="0.8" textLength="99.1" lengthAdjust="spacingAndGlyphs" fill="#000">Real</text>
<rect x="1374.5" y="1162.0" width="215.5" height="102.0" fill="#B3B3B3"/>
<rect x="1364.5" y="1152.0" width="215.0" height="101.0" fill="url(#gP27)" stroke="#9A8A58" stroke-width="4"/>
<text x="1388.0" y="1202.5" font-size="46" font-weight="bold" stroke="url(#gP27)" stroke-width="0.8" textLength="26.4" lengthAdjust="spacingAndGlyphs" fill="#000">a</text>
<text x="1422.4" y="1202.5" font-size="46" font-weight="bold" stroke="url(#gP27)" stroke-width="0.8" textLength="15.8" lengthAdjust="spacingAndGlyphs" fill="#000">:</text>
<text x="1446.2" y="1202.5" font-size="46" font-weight="bold" stroke="url(#gP27)" stroke-width="0.8" textLength="100.2" lengthAdjust="spacingAndGlyphs" fill="#000">Real</text>
<rect x="1681.0" y="1158.5" width="215.0" height="102.0" fill="#B3B3B3"/>
<rect x="1671.0" y="1148.5" width="214.5" height="101.0" fill="url(#gP28)" stroke="#9A8A58" stroke-width="4"/>
<text x="1695.0" y="1200.0" font-size="46" font-weight="bold" stroke="url(#gP28)" stroke-width="0.8" textLength="26.2" lengthAdjust="spacingAndGlyphs" fill="#000">c</text>
<text x="1729.2" y="1200.0" font-size="46" font-weight="bold" stroke="url(#gP28)" stroke-width="0.8" textLength="15.7" lengthAdjust="spacingAndGlyphs" fill="#000">:</text>
<text x="1752.9" y="1200.0" font-size="46" font-weight="bold" stroke="url(#gP28)" stroke-width="0.8" textLength="99.6" lengthAdjust="spacingAndGlyphs" fill="#000">Real</text>
<rect x="1945.0" y="1158.5" width="320.5" height="102.0" fill="#B3B3B3"/>
<rect x="1935.0" y="1148.5" width="320.0" height="101.0" fill="url(#gP29)" stroke="#9A8A58" stroke-width="4"/>
<text x="1972.5" y="1200.0" font-size="46" font-weight="bold" stroke="url(#gP29)" stroke-width="0.8" textLength="109.9" lengthAdjust="spacingAndGlyphs" fill="#000">nOpt</text>
<text x="2090.3" y="1200.0" font-size="46" font-weight="bold" stroke="url(#gP29)" stroke-width="0.8" textLength="15.7" lengthAdjust="spacingAndGlyphs" fill="#000">:</text>
<text x="2114.0" y="1200.0" font-size="46" font-weight="bold" stroke="url(#gP29)" stroke-width="0.8" textLength="99.5" lengthAdjust="spacingAndGlyphs" fill="#000">Real</text>
<rect x="2357.0" y="1158.0" width="269.5" height="101.5" fill="#B3B3B3"/>
<rect x="2347.0" y="1148.0" width="269.0" height="100.5" fill="url(#gP30)" stroke="#9A8A58" stroke-width="4"/>
<text x="2385.0" y="1200.0" font-size="46" font-weight="bold" stroke="url(#gP30)" stroke-width="0.8" textLength="56.8" lengthAdjust="spacingAndGlyphs" fill="#000">P0</text>
<text x="2449.6" y="1200.0" font-size="46" font-weight="bold" stroke="url(#gP30)" stroke-width="0.8" textLength="15.5" lengthAdjust="spacingAndGlyphs" fill="#000">:</text>
<text x="2472.9" y="1200.0" font-size="46" font-weight="bold" stroke="url(#gP30)" stroke-width="0.8" textLength="98.0" lengthAdjust="spacingAndGlyphs" fill="#000">Real</text>
<rect x="1505.0" y="1275.5" width="219.5" height="101.0" fill="#B3B3B3"/>
<rect x="1495.0" y="1265.5" width="219.0" height="100.0" fill="url(#gP31)" stroke="#9A8A58" stroke-width="4"/>
<text x="1518.5" y="1317.5" font-size="46" font-weight="bold" stroke="url(#gP31)" stroke-width="0.8" textLength="29.2" lengthAdjust="spacingAndGlyphs" fill="#000">b</text>
<text x="1555.8" y="1317.5" font-size="46" font-weight="bold" stroke="url(#gP31)" stroke-width="0.8" textLength="15.9" lengthAdjust="spacingAndGlyphs" fill="#000">:</text>
<text x="1579.9" y="1317.5" font-size="46" font-weight="bold" stroke="url(#gP31)" stroke-width="0.8" textLength="101.1" lengthAdjust="spacingAndGlyphs" fill="#000">Real</text>
<rect x="1798.0" y="1275.5" width="219.5" height="101.0" fill="#B3B3B3"/>
<rect x="1788.0" y="1265.5" width="219.0" height="100.0" fill="url(#gP32)" stroke="#9A8A58" stroke-width="4"/>
<text x="1812.5" y="1317.5" font-size="46" font-weight="bold" stroke="url(#gP32)" stroke-width="0.8" textLength="29.2" lengthAdjust="spacingAndGlyphs" fill="#000">d</text>
<text x="1849.8" y="1317.5" font-size="46" font-weight="bold" stroke="url(#gP32)" stroke-width="0.8" textLength="15.9" lengthAdjust="spacingAndGlyphs" fill="#000">:</text>
<text x="1873.9" y="1317.5" font-size="46" font-weight="bold" stroke="url(#gP32)" stroke-width="0.8" textLength="101.1" lengthAdjust="spacingAndGlyphs" fill="#000">Real</text>
<rect x="2151.0" y="1275.5" width="274.0" height="101.0" fill="#B3B3B3"/>
<rect x="2141.0" y="1265.5" width="273.5" height="100.0" fill="url(#gP33)" stroke="#9A8A58" stroke-width="4"/>
<text x="2177.5" y="1317.5" font-size="46" font-weight="bold" stroke="url(#gP33)" stroke-width="0.8" textLength="58.2" lengthAdjust="spacingAndGlyphs" fill="#000">nq</text>
<text x="2243.8" y="1317.5" font-size="46" font-weight="bold" stroke="url(#gP33)" stroke-width="0.8" textLength="15.9" lengthAdjust="spacingAndGlyphs" fill="#000">:</text>
<text x="2267.8" y="1317.5" font-size="46" font-weight="bold" stroke="url(#gP33)" stroke-width="0.8" textLength="100.7" lengthAdjust="spacingAndGlyphs" fill="#000">Real</text>
<rect x="2503.5" y="1275.5" width="274.0" height="101.0" fill="#B3B3B3"/>
<rect x="2493.5" y="1265.5" width="273.5" height="100.0" fill="url(#gP34)" stroke="#9A8A58" stroke-width="4"/>
<text x="2531.0" y="1317.5" font-size="46" font-weight="bold" stroke="url(#gP34)" stroke-width="0.8" textLength="62.0" lengthAdjust="spacingAndGlyphs" fill="#000">Qa</text>
<text x="2600.9" y="1317.5" font-size="46" font-weight="bold" stroke="url(#gP34)" stroke-width="0.8" textLength="15.5" lengthAdjust="spacingAndGlyphs" fill="#000">:</text>
<text x="2624.2" y="1317.5" font-size="46" font-weight="bold" stroke="url(#gP34)" stroke-width="0.8" textLength="98.2" lengthAdjust="spacingAndGlyphs" fill="#000">Real</text>
<rect x="1260.5" y="1439.5" width="1797.5" height="588.5" fill="#B3B3B3"/>
<rect x="1250.5" y="1429.5" width="1797.0" height="587.5" fill="url(#gY35)" stroke="#9A8A58" stroke-width="4"/>
<line x1="1250.5" y1="1504.5" x2="3047.5" y2="1504.5" stroke="#9A8A58" stroke-width="4"/>
<text x="1904.4" y="1481.0" font-size="46" font-weight="bold" stroke="url(#gY35)" stroke-width="0.8" textLength="16.3" lengthAdjust="spacingAndGlyphs" fill="#000">:</text>
<text x="1929.0" y="1481.0" font-size="46" font-weight="bold" stroke="url(#gY35)" stroke-width="0.8" textLength="335.2" lengthAdjust="spacingAndGlyphs" fill="#000">hydrodynamic</text>
<text x="2272.5" y="1481.0" font-size="46" font-weight="bold" stroke="url(#gY35)" stroke-width="0.8" textLength="130.8" lengthAdjust="spacingAndGlyphs" fill="#000">effect</text>
<rect x="1320.0" y="1586.0" width="1646.0" height="352.5" rx="18" ry="18" fill="#B3B3B3"/>
<rect x="1310.0" y="1576.0" width="1645.5" height="351.5" rx="17" ry="17" fill="url(#gB36)" stroke="#9A8A58" stroke-width="4"/>
<text x="2006.0" y="1691.0" font-size="45" font-weight="normal" textLength="249.0" lengthAdjust="spacingAndGlyphs" fill="#000">«constraint»</text>
<text x="1945.0" y="1754.0" font-size="46" font-weight="bold" stroke="url(#gB36)" stroke-width="0.8" textLength="16.0" lengthAdjust="spacingAndGlyphs" fill="#000">:</text>
<text x="1969.2" y="1754.0" font-size="46" font-weight="bold" stroke="url(#gB36)" stroke-width="0.8" textLength="355.8" lengthAdjust="spacingAndGlyphs" fill="#000">hydrodynamics</text>
<text x="1496.0" y="1816.0" font-size="45" font-weight="normal" textLength="115.8" lengthAdjust="spacingAndGlyphs" fill="#000">{[Q,T]</text>
<text x="1624.4" y="1816.0" font-size="45" font-weight="normal" textLength="26.5" lengthAdjust="spacingAndGlyphs" fill="#000">=</text>
<text x="1663.5" y="1816.0" font-size="45" font-weight="normal" textLength="1201.5" lengthAdjust="spacingAndGlyphs" fill="#000">hydrodynamics(a,b,c,d,p_1,p_2,n_opt,n,n_q,D_2,P_0,Q_a)}</text>
<text x="1498.5" y="1551.5" font-size="45" font-weight="normal" textLength="22.9" lengthAdjust="spacingAndGlyphs" fill="#000">a</text>
<text x="1655.0" y="1551.5" font-size="45" font-weight="normal" textLength="22.5" lengthAdjust="spacingAndGlyphs" fill="#000">b</text>
<text x="1823.5" y="1551.5" font-size="45" font-weight="normal" textLength="22.5" lengthAdjust="spacingAndGlyphs" fill="#000">c</text>
<text x="1951.0" y="1551.5" font-size="45" font-weight="normal" textLength="24.0" lengthAdjust="spacingAndGlyphs" fill="#000">d</text>
<text x="2067.8" y="1551.5" font-size="45" font-weight="normal" textLength="108.9" lengthAdjust="spacingAndGlyphs" fill="#000">n_opt</text>
<text x="2307.8" y="1551.5" font-size="45" font-weight="normal" textLength="74.4" lengthAdjust="spacingAndGlyphs" fill="#000">n_q</text>
<text x="2448.5" y="1551.5" font-size="45" font-weight="normal" textLength="71.5" lengthAdjust="spacingAndGlyphs" fill="#000">P_0</text>
<text x="2620.0" y="1551.5" font-size="45" font-weight="normal" textLength="81.5" lengthAdjust="spacingAndGlyphs" fill="#000">Q_a</text>
<text x="2887.5" y="1551.5" font-size="45" font-weight="normal" textLength="79.0" lengthAdjust="spacingAndGlyphs" fill="#000">D_2</text>
<text x="1209.0" y="1690.0" font-size="45" font-weight="normal" textLength="70.0" lengthAdjust="spacingAndGlyphs" fill="#000">p_1</text>
<text x="2980.0" y="1742.5" font-size="45" font-weight="normal" textLength="74.0" lengthAdjust="spacingAndGlyphs" fill="#000">p_2</text>
<text x="1570.0" y="1981.0" font-size="45" font-weight="normal" textLength="22.5" lengthAdjust="spacingAndGlyphs" fill="#000">n</text>
<text x="1774.0" y="1981.0" font-size="45" font-weight="normal" textLength="27.0" lengthAdjust="spacingAndGlyphs" fill="#000">T</text>
<text x="2700.0" y="1980.0" font-size="45" font-weight="normal" textLength="30.0" lengthAdjust="spacingAndGlyphs" fill="#000">Q</text>
<path d="M1448.5 1255.0 L1448.5 1576.0" fill="none" stroke="#000" stroke-width="4" stroke-linejoin="miter" stroke-linecap="butt"/>
<path d="M1595.5 1367.5 L1595.5 1576.0" fill="none" stroke="#000" stroke-width="4" stroke-linejoin="miter" stroke-linecap="butt"/>
<path d="M1771.5 1251.5 L1771.5 1576.0" fill="none" stroke="#000" stroke-width="4" stroke-linejoin="miter" stroke-linecap="butt"/>
<path d="M1918.5 1367.5 L1918.5 1576.0" fill="none" stroke="#000" stroke-width="4" stroke-linejoin="miter" stroke-linecap="butt"/>
<path d="M2065.5 1251.5 L2065.5 1576.0" fill="none" stroke="#000" stroke-width="4" stroke-linejoin="miter" stroke-linecap="butt"/>
<path d="M2300.5 1367.5 L2300.5 1576.0" fill="none" stroke="#000" stroke-width="4" stroke-linejoin="miter" stroke-linecap="butt"/>
<path d="M2447.5 1250.5 L2447.5 1576.0" fill="none" stroke="#000" stroke-width="4" stroke-linejoin="miter" stroke-linecap="butt"/>
<path d="M2594.5 1367.5 L2594.5 1576.0" fill="none" stroke="#000" stroke-width="4" stroke-linejoin="miter" stroke-linecap="butt"/>
<path d="M2139.5 484.5 L2888.5 484.5 L2888.5 1576.0" fill="none" stroke="#000" stroke-width="4" stroke-linejoin="miter" stroke-linecap="butt"/>
<path d="M3022.0 416.5 L3006.0 416.5 L3006.0 1768.5 L2956.5 1768.5" fill="none" stroke="#000" stroke-width="4" stroke-linejoin="miter" stroke-linecap="butt"/>
<path d="M733.0 387.5 L1196.5 387.5 L1196.5 1710.5 L1309.0 1710.5" fill="none" stroke="#000" stroke-width="4" stroke-linejoin="miter" stroke-linecap="butt"/>
<path d="M971.5 504.5 L1125.0 504.5 L1125.0 2150.5 L3312.5 2150.5 L3312.5 590.0" fill="none" stroke="#000" stroke-width="4" stroke-linejoin="miter" stroke-linecap="butt"/>
<path d="M811.5 2003.5 H948.5 V2033.5 H1110" fill="none" stroke="#000" stroke-width="4"/>
<path d="M1140 2033.5 H1515.5 V1929" fill="none" stroke="#000" stroke-width="4"/>
<path d="M1108 2035.5 V2031 A17 14 0 0 1 1142 2031 V2035.5" fill="none" stroke="#444" stroke-width="3.6"/>
<path d="M631.5 2121.5 H1110" fill="none" stroke="#000" stroke-width="4"/>
<path d="M1140 2121.5 H1721.5 V1929" fill="none" stroke="#000" stroke-width="4"/>
<path d="M1108 2123.5 V2119 A17 14 0 0 1 1142 2119 V2123.5" fill="none" stroke="#444" stroke-width="3.6"/>
<path d="M2634.0 1929.0 L2634.0 2152.0" fill="none" stroke="#000" stroke-width="8" stroke-linejoin="miter" stroke-linecap="butt"/>
<path d="M1125.0 2005.0 L1125.0 2130.0" fill="none" stroke="#000" stroke-width="4" stroke-linejoin="miter" stroke-linecap="butt"/>
<rect x="1419.5" y="1577.0" width="62.0" height="61.5" fill="url(#gQ37)" stroke="#5C9A68" stroke-width="4"/>
<rect x="1575.0" y="1577.0" width="62.0" height="61.5" fill="url(#gQ38)" stroke="#5C9A68" stroke-width="4"/>
<rect x="1743.0" y="1577.0" width="61.5" height="61.5" fill="url(#gQ39)" stroke="#5C9A68" stroke-width="4"/>
<rect x="1873.0" y="1577.0" width="61.5" height="61.5" fill="url(#gQ40)" stroke="#5C9A68" stroke-width="4"/>
<rect x="2024.5" y="1577.0" width="61.5" height="61.5" fill="url(#gQ41)" stroke="#5C9A68" stroke-width="4"/>
<rect x="2255.0" y="1577.0" width="61.5" height="61.5" fill="url(#gQ42)" stroke="#5C9A68" stroke-width="4"/>
<rect x="2393.5" y="1577.0" width="62.0" height="61.5" fill="url(#gQ43)" stroke="#5C9A68" stroke-width="4"/>
<rect x="2569.5" y="1577.0" width="62.0" height="61.5" fill="url(#gQ44)" stroke="#5C9A68" stroke-width="4"/>
<rect x="2838.0" y="1577.0" width="62.0" height="61.5" fill="url(#gQ45)" stroke="#5C9A68" stroke-width="4"/>
<rect x="1310.5" y="1682.0" width="61.5" height="61.0" fill="url(#gQ46)" stroke="#5C9A68" stroke-width="4"/>
<rect x="2893.0" y="1736.0" width="61.5" height="61.0" fill="url(#gQ47)" stroke="#5C9A68" stroke-width="4"/>
<rect x="1490.5" y="1866.0" width="62.0" height="61.0" fill="url(#gQ48)" stroke="#5C9A68" stroke-width="4"/>
<rect x="1696.0" y="1866.0" width="62.0" height="61.0" fill="url(#gQ49)" stroke="#5C9A68" stroke-width="4"/>
<rect x="2624.5" y="1866.0" width="62.0" height="61.0" fill="url(#gQ50)" stroke="#5C9A68" stroke-width="4"/>
</svg>
</body></html>
